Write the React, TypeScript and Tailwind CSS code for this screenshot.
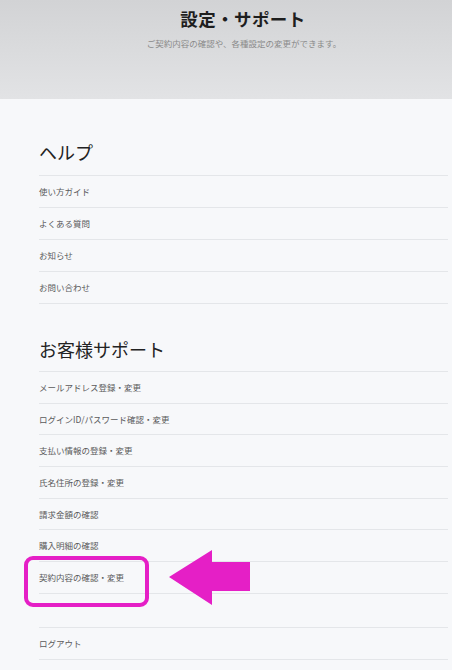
import React from "react";

const helpItems = ["使い方ガイド", "よくある質問", "お知らせ", "お問い合わせ"];
const supportItems = [
  "メールアドレス登録・変更",
  "ログインID/パスワード確認・変更",
  "支払い情報の登録・変更",
  "氏名住所の登録・変更",
  "請求金額の確認",
  "購入明細の確認",
  "契約内容の確認・変更",
];

const font = { fontFamily: '"Noto Sans CJK JP", "Noto Sans", sans-serif' };

const Row = ({ label, tight }: { label: string; tight?: boolean }) => (
  <li
    className={`${tight ? "h-[31.7px]" : "h-[32px]"} flex items-center border-b border-[#e4e6e9] text-[8.5px] text-[#5a5a5a]`}
  >
    {label}
  </li>
);

const App = () => {
  return (
    <div className="relative w-[452px] min-h-[670px] bg-[#f7f8fa] overflow-hidden" style={font}>
      {/* Header */}
      <header className="h-[99px] flex flex-col items-center bg-gradient-to-b from-[#d2d3d5] to-[#e2e3e5]">
        <h1 className="mt-[5px] text-[17.5px] leading-[27px] font-bold text-[#1e1e1e] tracking-[0.4px] pl-[34px]">
          設定・サポート
        </h1>
        <p className="mt-[5px] text-[8.5px] text-[#8a8a8a] pl-[36px]">
          ご契約内容の確認や、各種設定の変更ができます。
        </p>
      </header>

      <main className="pl-[39px] pr-[4px]">
        {/* Help */}
        <section className="pt-[39px]">
          <h2 className="h-[28px] leading-[28px] text-[18px] text-[#222] font-normal mb-[9px]">ヘルプ</h2>
          <ul className="border-t border-[#e4e6e9]">
            {helpItems.map((item) => (
              <Row key={item} label={item} />
            ))}
          </ul>
        </section>

        {/* Support */}
        <section className="pt-[31px]">
          <h2 className="h-[28px] leading-[28px] text-[18px] text-[#222] font-normal mb-[8px]">お客様サポート</h2>
          <ul className="border-t border-[#e4e6e9]">
            {supportItems.map((item) => (
              <Row key={item} label={item} tight />
            ))}
          </ul>
        </section>

        <ul className="mt-[33px] border-t border-[#e4e6e9]">
          <Row label="ログアウト" />
        </ul>
      </main>

      {/* highlight overlay */}
      <div className="absolute left-[24px] top-[556px] w-[125px] h-[51px] border-[4px] border-[#e51fc6] rounded-[9px]" />
      <svg className="absolute left-[169px] top-[550px]" width="82" height="56" viewBox="0 0 82 56">
        <polygon points="0,27 43,0 43,12 81,12 81,41 43,41 43,55" fill="#e51fc6" />
      </svg>
    </div>
  );
};

export default App;
